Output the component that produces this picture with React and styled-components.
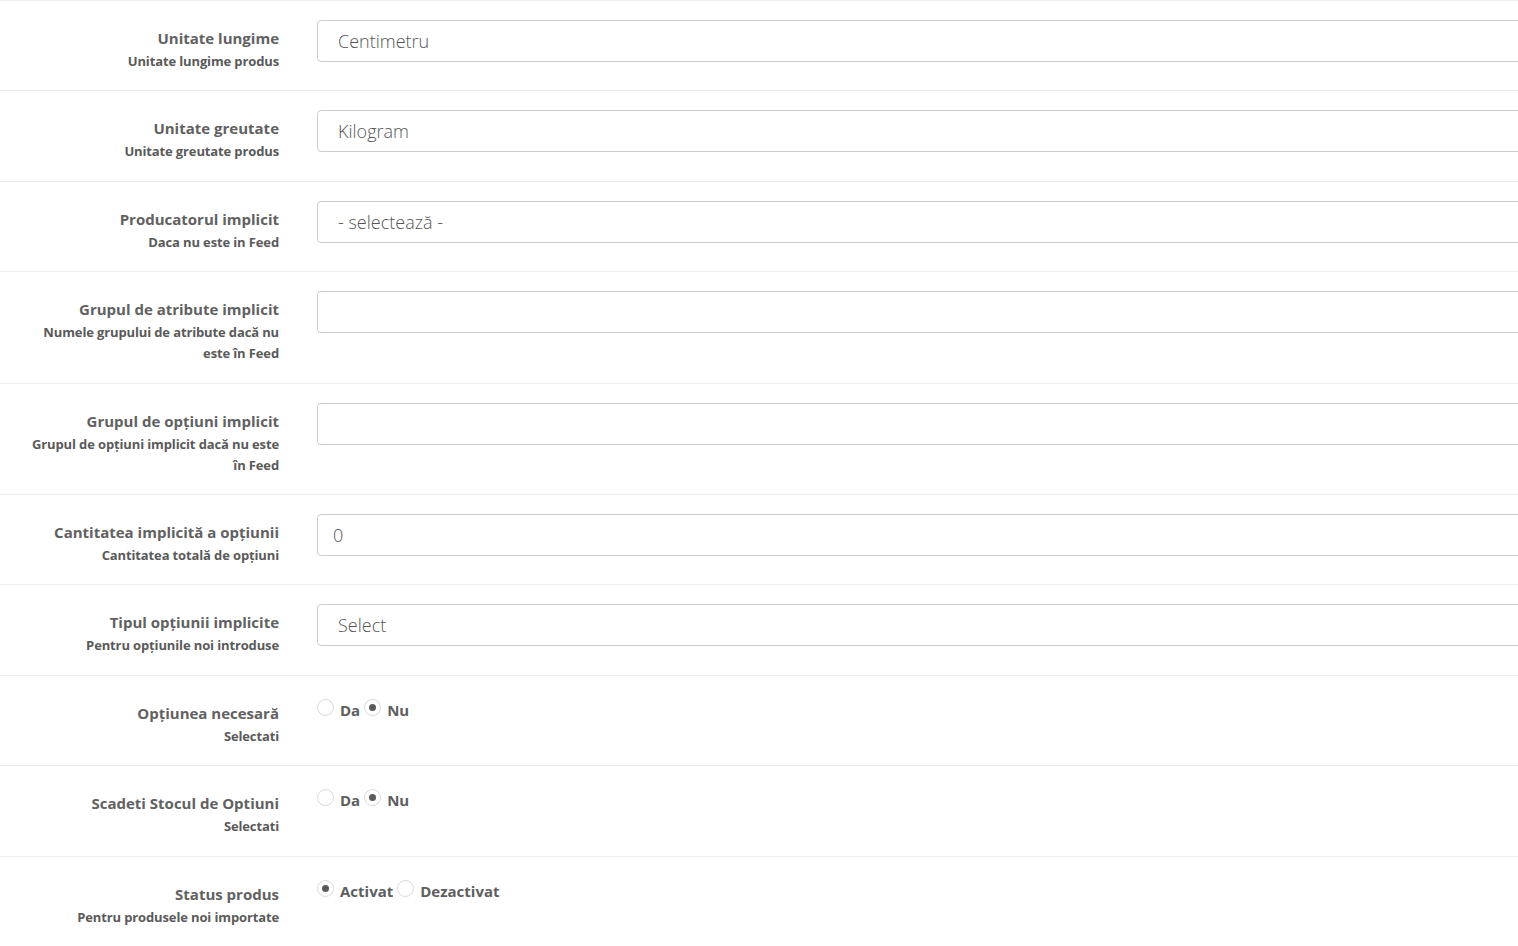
import React from "react";
import styled, { createGlobalStyle } from "styled-components";

const Global = createGlobalStyle`
  html, body { margin: 0; padding: 0; background: #fff; }
  body { font-family: "Open Sans", "Liberation Sans", sans-serif; overflow: hidden; }
  * { box-sizing: border-box; }
`;

const Page = styled.div`
  width: 100%;
  overflow: hidden;
`;

const Form = styled.div`
  width: calc(100% + 40px);
`;

const Row = styled.div`
  display: grid;
  grid-template-columns: 280px 1fr;
  column-gap: 37px;
  border-top: 1px solid #eeeeee;
  padding: 19px 0 ${(p) => (p.$last ? "40px" : "18.4px")};
`;

const LabelCol = styled.div`
  padding: 6px 1px 0 26px;
  text-align: right;
  color: #616161;
  font-weight: 700;
`;

const Title = styled.div`
  font-size: 15px;
  line-height: 24px;
`;

const Sub = styled.div`
  margin-top: 1px;
  font-size: 13px;
  line-height: 21px;
  letter-spacing: -0.13px;
  color: #5a5a5a;
`;

const Control = styled.div`
  min-width: 0;
`;

const fieldBase = `
  display: block;
  width: 100%;
  height: 42px;
  border: 1px solid #cccccc;
  border-radius: 4px;
  font-family: "Open Sans", "Liberation Sans", sans-serif;
  font-size: 18px;
  font-weight: 300;
  color: #555555;
  background: #fff;
  outline: none;
`;

const TextInput = styled.input`
  ${fieldBase}
  padding: 0 15px;
`;

const SelectBox = styled.select`
  ${fieldBase}
  padding: 0 20px;
  appearance: none;
  -webkit-appearance: none;
`;

const RadioGroup = styled.div`
  display: flex;
  align-items: flex-start;
  padding-top: 3px;
`;

const RadioItem = styled.label`
  display: flex;
  align-items: flex-start;
  margin-right: 4px;
  font-size: 15px;
  font-weight: 700;
  line-height: 24px;
  color: #5e5e5e;
`;

const Circle = styled.span`
  width: 17px;
  height: 17px;
  margin-top: 1px;
  border-radius: 50%;
  border: 1px solid #d9d9d9;
  background: #fff;
  margin-right: 6px;
  display: flex;
  align-items: center;
  justify-content: center;
  &::after {
    content: "";
    width: 7px;
    height: 7px;
    border-radius: 50%;
    background: ${(p) => (p.$checked ? "#5a5a5a" : "transparent")};
  }
`;

const rows = [
  { title: "Unitate lungime", sub: "Unitate lungime produs", type: "select", value: "Centimetru" },
  { title: "Unitate greutate", sub: "Unitate greutate produs", type: "select", value: "Kilogram" },
  { title: "Producatorul implicit", sub: "Daca nu este in Feed", type: "select", value: "- selectează -" },
  { title: "Grupul de atribute implicit", sub: "Numele grupului de atribute dacă nu este în Feed", type: "text", value: "" },
  { title: "Grupul de opțiuni implicit", sub: "Grupul de opțiuni implicit dacă nu este în Feed", type: "text", value: "" },
  { title: "Cantitatea implicită a opțiunii", sub: "Cantitatea totală de opțiuni", type: "text", value: "0" },
  { title: "Tipul opțiunii implicite", sub: "Pentru opțiunile noi introduse", type: "select", value: "Select" },
  { title: "Opțiunea necesară", sub: "Selectati", type: "radio", options: ["Da", "Nu"], checked: 1 },
  { title: "Scadeti Stocul de Optiuni", sub: "Selectati", type: "radio", options: ["Da", "Nu"], checked: 1 },
  { title: "Status produs", sub: "Pentru produsele noi importate", type: "radio", options: ["Activat", "Dezactivat"], checked: 0 },
];

function Field({ r }) {
  if (r.type === "select") {
    return (
      <SelectBox defaultValue={r.value}>
        <option>{r.value}</option>
      </SelectBox>
    );
  }
  if (r.type === "text") {
    return <TextInput type="text" defaultValue={r.value} />;
  }
  return (
    <RadioGroup>
      {r.options.map((o, i) => (
        <RadioItem key={o}>
          <Circle $checked={i === r.checked} />
          {o}
        </RadioItem>
      ))}
    </RadioGroup>
  );
}

export default function App() {
  return (
    <Page>
      <Global />
      <Form>
        {rows.map((r, i) => (
          <Row key={r.title} $last={i === rows.length - 1}>
            <LabelCol>
              <Title>{r.title}</Title>
              <Sub>{r.sub}</Sub>
            </LabelCol>
            <Control>
              <Field r={r} />
            </Control>
          </Row>
        ))}
      </Form>
    </Page>
  );
}
